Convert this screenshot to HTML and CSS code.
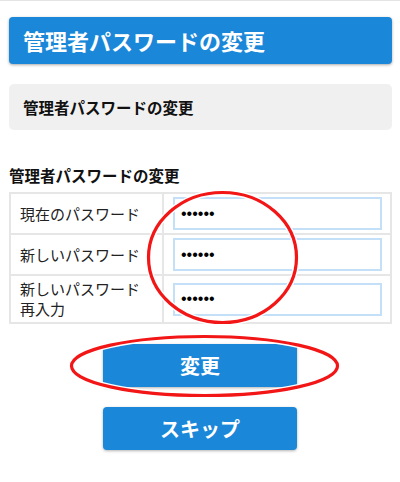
FILE: index.html
```html
<!DOCTYPE html>
<html lang="ja">
<head>
<meta charset="utf-8">
<link rel="stylesheet" href="styles.css">
</head>
<body>
<div class="topline"></div>
<main class="page">
  <h1 class="title">管理者パスワードの変更</h1>
  <div class="subbox">管理者パスワードの変更</div>
  <h2 class="section">管理者パスワードの変更</h2>
  <table class="form">
    <colgroup><col class="c-label"><col></colgroup>
    <tr>
      <td class="label">現在のパスワード</td>
      <td class="field"><input type="password" value="123456"></td>
    </tr>
    <tr>
      <td class="label">新しいパスワード</td>
      <td class="field"><input type="password" value="123456"></td>
    </tr>
    <tr>
      <td class="label">新しいパスワード再入力</td>
      <td class="field"><input type="password" value="123456"></td>
    </tr>
  </table>
  <div class="buttons">
    <button class="btn">変更</button>
    <button class="btn">スキップ</button>
  </div>
</main>
<svg class="marks" width="400" height="482" viewBox="0 0 400 482">
  <ellipse cx="222.5" cy="257.5" rx="74" ry="65" fill="none" stroke="#ffffff" stroke-width="6"/>
  <ellipse cx="222.5" cy="257.5" rx="74" ry="65" fill="none" stroke="#f21616" stroke-width="3.2"/>
  <ellipse cx="204.5" cy="366" rx="133" ry="29.5" fill="none" stroke="#ffffff" stroke-width="6"/>
  <ellipse cx="204.5" cy="366" rx="133" ry="29.5" fill="none" stroke="#f21616" stroke-width="3.2"/>
</svg>
</body>
</html>
```
FILE: styles.css
```css
html, body {
  margin: 0;
  padding: 0;
  background: #ffffff;
}
body {
  position: relative;
  width: 400px;
  height: 482px;
  overflow: hidden;
  font-family: "Noto Sans CJK JP", "Noto Sans", sans-serif;
  color: #111;
}
.topline {
  height: 1px;
  background: #e4e4e4;
}
.page {
  padding: 16px 8px 0 9px;
}
.title {
  margin: 0;
  height: 47px;
  line-height: 47px;
  padding-left: 14px;
  background: #1a87d9;
  color: #fff;
  font-size: 22px;
  font-weight: bold;
  border-radius: 4px;
  box-shadow: 0 1px 3px rgba(0, 0, 0, 0.35);
}
.subbox {
  margin-top: 20px;
  height: 46px;
  line-height: 46px;
  padding-left: 14px;
  background: #f0f0f0;
  border-radius: 5px;
  font-size: 15.5px;
  font-weight: bold;
}
.section {
  margin: 35px 0 0 0;
  font-size: 15.5px;
  line-height: 20px;
  font-weight: bold;
}
.form {
  margin-top: 7px;
  width: 100%;
  border-collapse: collapse;
  table-layout: fixed;
}
.c-label {
  width: 153px;
}
.form td {
  border: 2px solid #e6e6e6;
  vertical-align: middle;
}
.label {
  padding: 3px 8px 3px 9px;
  font-size: 15px;
  line-height: 20px;
  color: #222;
}
.field {
  padding: 3px 8px 3px 9px;
}
.field input {
  display: block;
  box-sizing: border-box;
  width: 100%;
  height: 33px;
  margin: 0;
  padding: 0 6px;
  border: 2px solid #c4e0f8;
  border-radius: 0;
  background: #fff;
  font-family: "Liberation Sans", sans-serif;
  font-size: 16px;
  color: #000;
  outline: none;
}
.buttons {
  display: flex;
  flex-direction: column;
  align-items: center;
  gap: 20px;
  margin-top: 20px;
  padding-right: 1px;
}
.btn {
  width: 194px;
  height: 43px;
  border: none;
  border-radius: 4px;
  background: #1a87d9;
  color: #fff;
  font-family: "Noto Sans CJK JP", "Noto Sans", sans-serif;
  font-size: 20px;
  font-weight: bold;
  box-shadow: 0 1px 3px rgba(0, 0, 0, 0.3);
  padding: 0;
}
.marks {
  position: absolute;
  left: 0;
  top: 0;
  pointer-events: none;
}
```
